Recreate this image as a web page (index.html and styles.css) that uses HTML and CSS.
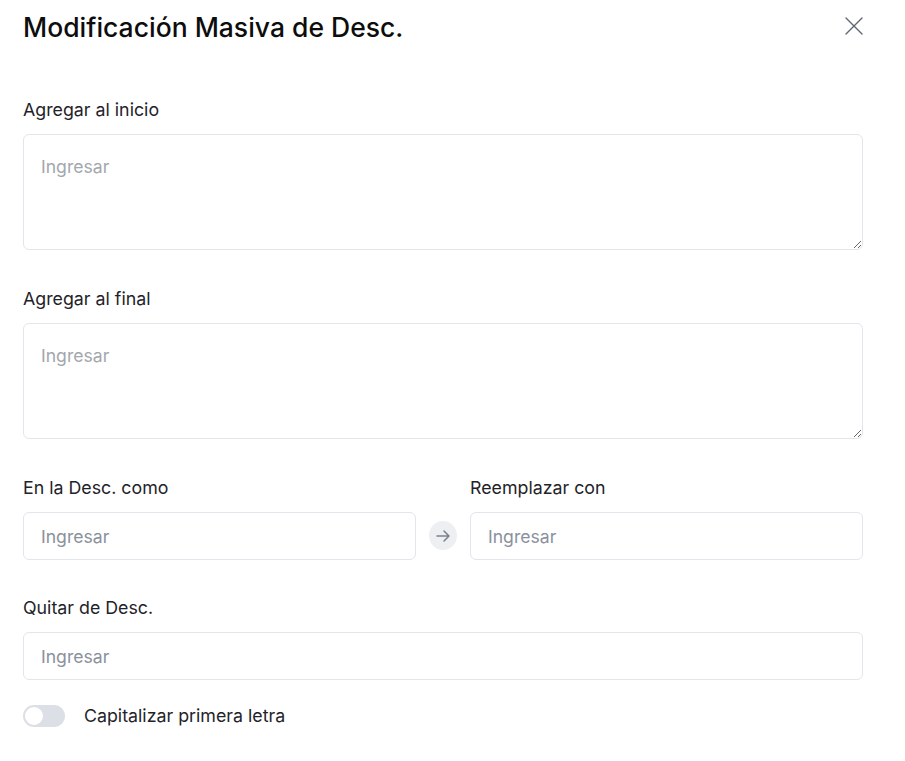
FILE: index.html
```html
<!DOCTYPE html>
<html lang="es">
<head>
<meta charset="utf-8">
<title>Modificación Masiva de Desc.</title>
<link rel="stylesheet" href="styles.css">
</head>
<body>
<div class="modal">
  <header class="modal-header">
    <h1 class="modal-title">Modificación Masiva de Desc.</h1>
    <button class="close-btn" aria-label="Cerrar">
      <svg width="18" height="18" viewBox="0 0 18 18" fill="none" stroke="#5f6675" stroke-width="1.4" stroke-linecap="round"><path d="M1 1L17 17M17 1L1 17"/></svg>
    </button>
  </header>

  <div class="field field-first">
    <label class="label">Agregar al inicio</label>
    <textarea class="textarea" placeholder="Ingresar"></textarea>
  </div>

  <div class="field">
    <label class="label">Agregar al final</label>
    <textarea class="textarea" placeholder="Ingresar"></textarea>
  </div>

  <div class="field replace-row">
    <div class="replace-col">
      <label class="label">En la Desc. como</label>
      <input class="input" type="text" placeholder="Ingresar">
    </div>
    <div class="arrow-wrap">
      <span class="arrow-circle">
        <svg width="16" height="16" viewBox="0 0 16 16" fill="none" stroke="#7b818c" stroke-width="1.5" stroke-linecap="round" stroke-linejoin="round"><path d="M2 8H14M9 3L14 8L9 13"/></svg>
      </span>
    </div>
    <div class="replace-col">
      <label class="label">Reemplazar con</label>
      <input class="input" type="text" placeholder="Ingresar">
    </div>
  </div>

  <div class="field field-last">
    <label class="label">Quitar de Desc.</label>
    <input class="input" type="text" placeholder="Ingresar">
  </div>

  <div class="toggle-row">
    <span class="toggle"><span class="knob"></span></span>
    <span class="toggle-label">Capitalizar primera letra</span>
  </div>
</div>
</body>
</html>
```

FILE: styles.css
```css
* { box-sizing: border-box; }
html, body { margin: 0; padding: 0; background: #ffffff; }
body {
  font-family: Inter, "Noto Sans", "Liberation Sans", sans-serif;
  color: #1f2329;
}
.modal {
  width: 840px;
  margin-left: 23px;
  padding-top: 12px;
}
.modal-header {
  display: flex;
  align-items: center;
  justify-content: space-between;
  height: 30px;
}
.modal-title {
  margin: 0;
  font-size: 26.5px;
  font-weight: 500;
  line-height: 30px;
  color: #0d0d0d;
}
.close-btn {
  border: 0;
  background: none;
  padding: 0;
  margin-right: 0;
  margin-top: -3px;
  width: 18px;
  height: 18px;
  display: flex;
  cursor: pointer;
}
.field { margin-top: 37px; }
.field-first { margin-top: 56px; }
.field-last { margin-top: 36px; }
.label {
  display: block;
  font-size: 17.8px;
  line-height: 24px;
  margin-bottom: 12px;
  color: #1f2329;
}
.textarea, .input {
  display: block;
  width: 100%;
  border: 1px solid #e3e5ea;
  border-radius: 6px;
  font-family: inherit;
  font-size: 17.6px;
  color: #1f2329;
  background: #fff;
  outline: none;
}
.textarea {
  height: 116px;
  padding: 20px 17px 18px;
  line-height: 24px;
  resize: vertical;
}
.input {
  height: 48px;
  padding: 0 17px;
}
.textarea::placeholder { color: #a3a7ae; }
.input::placeholder { color: #8b919c; }
.replace-row {
  display: grid;
  grid-template-columns: 1fr 28px 1fr;
  column-gap: 13px;
}
.arrow-wrap {
  display: flex;
  align-items: flex-end;
  padding-bottom: 10px;
}
.arrow-circle {
  width: 29px;
  height: 29px;
  border-radius: 50%;
  background: #eeeff2;
  display: flex;
  align-items: center;
  justify-content: center;
}
.toggle-row {
  display: flex;
  align-items: center;
  margin-top: 25px;
  gap: 19px;
}
.toggle {
  width: 42px;
  height: 22px;
  border-radius: 11px;
  background: #dcdfe6;
  padding: 2px;
  display: flex;
}
.knob {
  width: 18px;
  height: 18px;
  border-radius: 50%;
  background: #fff;
}
.toggle-label {
  font-size: 17.8px;
  line-height: 22px;
  color: #1f2329;
}
```
